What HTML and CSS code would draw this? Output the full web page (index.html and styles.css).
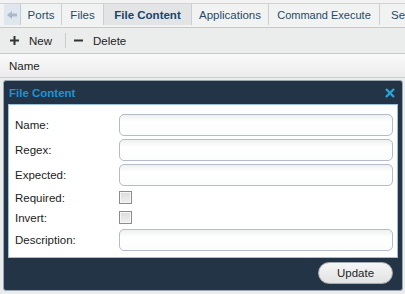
FILE: index.html
```html
<!DOCTYPE html>
<html>
<head>
<meta charset="utf-8">
<link rel="stylesheet" href="styles.css">
</head>
<body>
<div class="page">
  <div class="tabbar">
    <div class="tabstrip">
      <div class="scroll-btn"><svg width="10" height="10" viewBox="0 0 10 10"><path d="M0 5 L5 1 L5 3.5 L10 3.5 L10 6.5 L5 6.5 L5 9 Z" fill="#a8b9cc"/></svg></div>
      <div class="tab t-ports">Ports</div>
      <div class="tab t-files">Files</div>
      <div class="tab active t-fc">File Content</div>
      <div class="tab t-apps">Applications</div>
      <div class="tab t-cmd">Command Execute</div>
      <div class="tab t-ser">Services</div>
    </div>
  </div>
  <div class="toolbar">
    <div class="tool"><svg width="9" height="9" viewBox="0 0 9 9"><path d="M0 4.5 H9 M4.5 0 V9" stroke="#333" stroke-width="2"/></svg><span>New</span></div>
    <div class="sep"></div>
    <div class="tool"><svg width="9" height="9" viewBox="0 0 9 9"><path d="M0 4.5 H9" stroke="#333" stroke-width="2"/></svg><span>Delete</span></div>
  </div>
  <div class="gridhead"><span>Name</span></div>

  <div class="dialog">
    <div class="dlg-title">
      <span>File Content</span>
      <svg class="close" width="10" height="10" viewBox="0 0 10 10"><path d="M1 1 L9 9 M9 1 L1 9" stroke="#2aa3d9" stroke-width="2.4"/></svg>
    </div>
    <div class="dlg-body">
      <div class="row"><label>Name:</label><div class="input"></div></div>
      <div class="row"><label>Regex:</label><div class="input"></div></div>
      <div class="row"><label>Expected:</label><div class="input"></div></div>
      <div class="row small"><label>Required:</label><div class="check"></div></div>
      <div class="row small"><label>Invert:</label><div class="check"></div></div>
      <div class="row"><label>Description:</label><div class="input"></div></div>
    </div>
    <div class="dlg-foot">
      <div class="btn">Update</div>
    </div>
  </div>
</div>
</body>
</html>
```

FILE: styles.css
```css
* { box-sizing: border-box; }
html, body {
  margin: 0;
  padding: 0;
  width: 405px;
  height: 294px;
  overflow: hidden;
}
body {
  background: #ebecec;
  font-family: "Liberation Sans", Arial, sans-serif;
  font-size: 11px;
  color: #222;
}
.page {
  position: relative;
  width: 405px;
  height: 294px;
}
.tabbar {
  padding-top: 3px;
  height: 28px;
  border-bottom: 1px solid #c6c8c9;
  background: #f3f3f3;
}
.tabstrip {
  display: flex;
  height: 22px;
  border-top: 1px solid #cfd1d2;
  padding-left: 4px;
  overflow: hidden;
}
.scroll-btn {
  width: 17px;
  height: 21px;
  background: #dfe6ee;
  border-right: 1px solid #c3cbd3;
  display: flex;
  align-items: center;
  justify-content: center;
  flex: none;
}
.tab {
  flex: none;
  height: 21px;
  display: flex;
  align-items: center;
  justify-content: center;
  color: #1f4a68;
  background: #f1f2f2;
  border-right: 1px solid #cdd0d2;
  font-size: 11.5px;
  white-space: nowrap;
}
.t-ports { width: 41px; }
.t-files { width: 42px; }
.t-fc { width: 88px; }
.t-apps { width: 77px; }
.t-cmd { width: 111px; font-size: 11px; }
.t-ser { width: 60px; justify-content: flex-start; padding-left: 11px; }
.tab.active {
  background: #e2e4e6;
  font-weight: bold;
  color: #17456a;
  height: 22px;
}
.toolbar {
  height: 26px;
  display: flex;
  align-items: center;
  padding-left: 10px;
  border-bottom: 1px solid #c6c8c9;
  background: #ebecec;
}
.tool {
  display: flex;
  align-items: center;
  gap: 10px;
  font-size: 11.5px;
  color: #1e1e1e;
}
.sep {
  width: 1px;
  height: 15px;
  background: #c9cbcc;
  margin: 0 8px 0 13px;
}
.gridhead {
  height: 24px;
  display: flex;
  align-items: center;
  padding-left: 9px;
  background: linear-gradient(#fafafa, #ececec);
  border-bottom: 1px solid #cacccd;
  font-size: 11.5px;
  color: #1e1e1e;
}
.dialog {
  position: absolute;
  left: 3px;
  top: 80px;
  width: 400px;
  height: 211px;
  background: #243447;
  border: 1px solid #9aa6b2;
  border-radius: 3px;
  display: flex;
  flex-direction: column;
}
.dlg-title {
  height: 23px;
  display: flex;
  align-items: center;
  justify-content: space-between;
  padding: 0 7px 0 5px;
  color: #1c93d6;
  font-weight: bold;
  font-size: 11.5px;
}
.close { display: block; }
.dlg-body {
  margin: 0 4px;
  background: #fff;
  border: 1px solid #9cc0df;
  padding: 9px 4px 6px 6px;
  display: flex;
  flex-direction: column;
  gap: 3px;
}
.row {
  display: flex;
  align-items: center;
  height: 22px;
}
.row.small { height: 17px; }
.row label {
  width: 104px;
  flex: none;
  color: #222;
  font-size: 11.5px;
}
.input {
  flex: 1;
  height: 22px;
  border: 1px solid #b6bac9;
  border-radius: 5px;
  background: linear-gradient(#eef0f0, #ffffff 35%, #fbfcfc);
}
.check {
  width: 13px;
  height: 13px;
  border: 1px solid #8c8c8c;
  background: linear-gradient(#dcdcdc, #f0f0f0);
  box-shadow: inset 0 0 0 1px #f6f6f6;
}
.dlg-foot {
  flex: 1;
  display: flex;
  justify-content: flex-end;
  align-items: flex-start;
  padding: 4px 9px 0 0;
}
.btn {
  width: 75px;
  height: 22px;
  border-radius: 11px;
  border: 1px solid #a5aab0;
  background: linear-gradient(#f6f6f6, #e2e2e2);
  display: flex;
  align-items: center;
  justify-content: center;
  color: #1e1e1e;
  font-size: 11.5px;
}
```
